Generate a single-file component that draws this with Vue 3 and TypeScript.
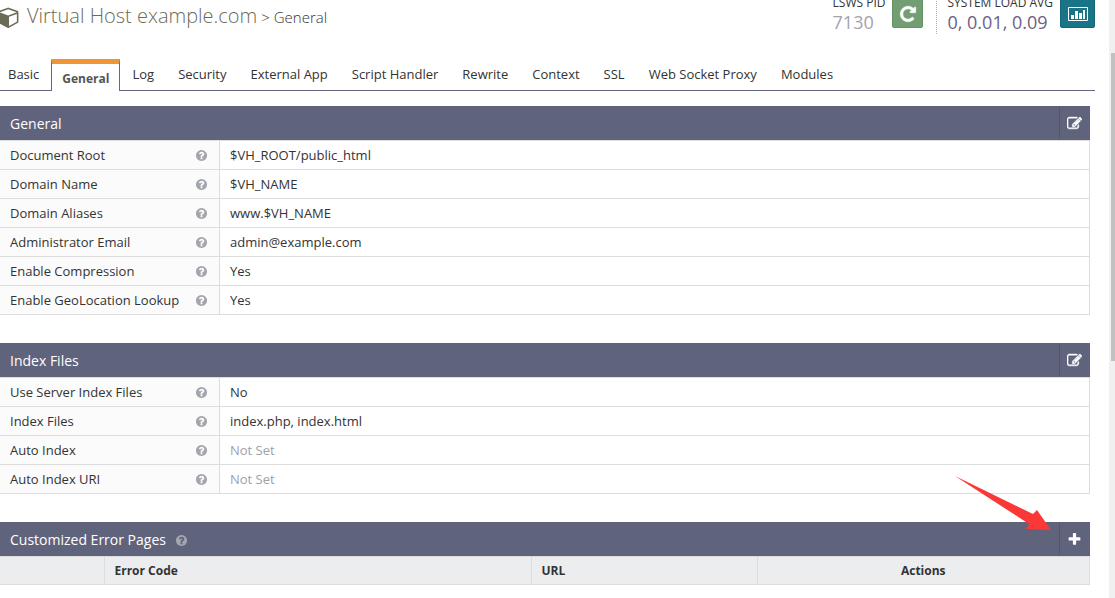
<script setup lang="ts">
import { ref } from 'vue'

interface Row {
  label: string
  value?: string
}
interface Section {
  title: string
  rows: Row[]
}

const tabs: string[] = [
  'Basic', 'General', 'Log', 'Security', 'External App', 'Script Handler',
  'Rewrite', 'Context', 'SSL', 'Web Socket Proxy', 'Modules',
]
const activeTab = ref('General')

const sections: Section[] = [
  {
    title: 'General',
    rows: [
      { label: 'Document Root', value: '$VH_ROOT/public_html' },
      { label: 'Domain Name', value: '$VH_NAME' },
      { label: 'Domain Aliases', value: 'www.$VH_NAME' },
      { label: 'Administrator Email', value: 'admin@example.com' },
      { label: 'Enable Compression', value: 'Yes' },
      { label: 'Enable GeoLocation Lookup', value: 'Yes' },
    ],
  },
  {
    title: 'Index Files',
    rows: [
      { label: 'Use Server Index Files', value: 'No' },
      { label: 'Index Files', value: 'index.php, index.html' },
      { label: 'Auto Index' },
      { label: 'Auto Index URI' },
    ],
  },
]

const helpPath =
  'M1024 1376v-192q0-14-9-23t-23-9h-192q-14 0-23 9t-9 23v192q0 14 9 23t23 9h192q14 0 23-9t9-23zm256-672q0-88-55.5-163t-138.5-116-170-41q-243 0-371 213-15 24 8 42l132 100q7 6 19 6 16 0 25-12 53-68 86-92 34-24 86-24 48 0 85.5 26t37.5 59q0 38-20 61t-68 45q-63 28-115.5 86.5t-52.5 125.5v36q0 14 9 23t23 9h192q14 0 23-9t9-23q0-19 21.5-49.5t54.5-49.5q32-18 49-28.5t46-35 44.5-48 28-60.5 12.5-81zm384 192q0 209-103 385.5t-279.5 279.5-385.5 103-385.5-103-279.5-279.5-103-385.5 103-385.5 279.5-279.5 385.5-103 385.5 103 279.5 279.5 103 385.5z'
const editPath =
  'M888 1184l116-116-152-152-116 116v56h96v96h56zm440-720q-16-16-33 1l-350 350q-17 17-1 33t33-1l350-350q17-17 1-33zm80 594v190q0 119-84.5 203.5t-203.5 84.5h-832q-119 0-203.5-84.5t-84.5-203.5v-832q0-119 84.5-203.5t203.5-84.5h832q63 0 117 25 15 7 18 23 3 17-9 29l-49 49q-14 14-32 8-23-6-45-6h-832q-66 0-113 47t-47 113v832q0 66 47 113t113 47h832q66 0 113-47t47-113v-126q0-13 9-22l64-64q15-15 35-7t20 29zm-96-738l288 288-672 672h-288v-288zm444 132l-92 92-288-288 92-92q28-28 68-28t68 28l152 152q28 28 28 68t-28 68z'
</script>

<template>
  <div class="screen">
    <main class="content">
      <header class="top">
        <h1 class="title">
          <svg class="cube" viewBox="0 0 1792 1792" aria-hidden="true">
            <path d="M896 1629l640-349v-636l-640 233v752zm-64-865l698-254-698-254-698 254zm832-252v768q0 35-18 65t-49 47l-704 384q-28 16-61 16t-61-16l-704-384q-31-17-49-47t-18-65v-768q0-40 23-73t61-47l704-256q22-8 44-8t44 8l704 256q38 14 61 47t23 73z" />
          </svg>
          <span class="name">Virtual Host example.com</span>
          <span class="crumb">&gt; General</span>
        </h1>
        <div class="stats">
          <div class="stat">
            <div class="figures">
              <span class="caption">LSWS PID</span>
              <span class="number pid">7130</span>
            </div>
            <button class="square restart" type="button" aria-label="Restart">
              <svg viewBox="0 0 1792 1792" width="18" height="18" aria-hidden="true">
                <path stroke="#fff" stroke-width="60" d="M1664 256v448q0 26-19 45t-45 19h-448q-42 0-59-40-17-39 14-69l138-138q-148-137-349-137-104 0-198.5 40.5t-163.5 109.5-109.5 163.5-40.5 198.5 40.5 198.5 109.5 163.5 163.5 109.5 198.5 40.5q119 0 225-52t179-147q7-10 23-12 15 0 25 9l137 138q9 8 9.5 20.5t-7.5 22.5q-109 132-264 204.5t-327 72.5q-156 0-298-61t-245-164-164-245-61-298 61-298 164-245 245-164 298-61q147 0 284.5 55.5t244.5 156.5l130-129q29-31 70-14 39 17 39 59z" />
              </svg>
            </button>
          </div>
          <div class="stat load">
            <div class="figures">
              <span class="caption">SYSTEM LOAD AVG</span>
              <span class="number">0, 0.01, 0.09</span>
            </div>
            <button class="square chart" type="button" aria-label="Load chart">
              <svg viewBox="0 0 20 14" width="20" height="14" aria-hidden="true">
                <path fill-rule="evenodd" d="M1 0H19Q20 0 20 1V13Q20 14 19 14H1Q0 14 0 13V1Q0 0 1 0ZM1 1V13H19V1ZM3 8H6V12H3ZM7 4H10V12H7ZM11 6H14V12H11ZM15 3H17V12H15Z" />
              </svg>
            </button>
          </div>
        </div>
      </header>

      <nav class="tabs">
        <a
          v-for="tab in tabs"
          :key="tab"
          href="#"
          class="tab"
          :class="{ active: tab === activeTab }"
          @click.prevent="activeTab = tab"
        >{{ tab }}</a>
      </nav>

      <section v-for="section in sections" :key="section.title" class="panel">
        <div class="bar">
          <h2>{{ section.title }}</h2>
          <button class="tool" type="button" :aria-label="'Edit ' + section.title">
            <svg viewBox="0 0 1792 1792" width="15" height="15" aria-hidden="true"><path stroke="#fff" stroke-width="60" :d="editPath" /></svg>
          </button>
        </div>
        <table class="props">
          <tbody>
            <tr v-for="row in section.rows" :key="row.label">
              <th scope="row">
                <div class="key">
                  <span>{{ row.label }}</span>
                  <svg class="help" viewBox="0 0 1792 1792" aria-hidden="true"><path :d="helpPath" /></svg>
                </div>
              </th>
              <td :class="{ unset: !row.value }">{{ row.value ?? 'Not Set' }}</td>
            </tr>
          </tbody>
        </table>
      </section>

      <section class="panel">
        <div class="bar">
          <h2>Customized Error Pages</h2>
          <svg class="help" viewBox="0 0 1792 1792" aria-hidden="true"><path :d="helpPath" /></svg>
          <button class="tool" type="button" aria-label="Add error page">
            <svg viewBox="0 0 1792 1792" width="15" height="15" aria-hidden="true">
              <path d="M1600 736v192q0 40-28 68t-68 28h-416v416q0 40-28 68t-68 28h-192q-40 0-68-28t-28-68v-416h-416q-40 0-68-28t-28-68v-192q0-40 28-68t68-28h416v-416q0-40 28-68t68-28h192q40 0 68 28t28 68v416h416q40 0 68 28t28 68z" />
            </svg>
          </button>
          <svg class="pointer" viewBox="0 0 97 55" width="97" height="55" aria-hidden="true">
            <path d="M0 0L78 38L82 34L96 54L71 53L74 48Z" />
          </svg>
        </div>
        <table class="errors">
          <colgroup>
            <col class="c-icon" /><col class="c-code" /><col class="c-url" /><col />
          </colgroup>
          <thead>
            <tr>
              <td></td>
              <th scope="col">Error Code</th>
              <th scope="col">URL</th>
              <th scope="col" class="actions">Actions</th>
            </tr>
          </thead>
        </table>
      </section>
    </main>
    <div class="rail"><div class="thumb"></div></div>
  </div>
</template>

<style>
body {
  margin: 0;
  background: #fff;
}
</style>

<style scoped>
.screen {
  display: flex;
  height: 100vh;
  overflow: hidden;
  font-family: "Open Sans", "Noto Sans", sans-serif;
  font-size: 13px;
  line-height: 18px;
  color: #333;
}
.content {
  flex: 1;
  min-width: 0;
  padding-right: 14px;
}
.rail {
  width: 4px;
  padding: 53px 0 0 2px;
  background: #f0f0f0;
}
.thumb {
  height: 308px;
  background: #c1c1c1;
}
.top {
  display: flex;
  justify-content: space-between;
  align-items: flex-start;
  height: 59px;
}
.title {
  display: flex;
  align-items: baseline;
  margin: 0;
  font-size: 20px;
  line-height: 32px;
  font-weight: 300;
  color: #6b6b56;
}
.cube {
  align-self: center;
  width: 22px;
  height: 22px;
  margin: 0 7px 0 -2px;
  fill: #6b6b56;
}
.crumb {
  margin-left: 4px;
  font-size: 15px;
  color: #333;
}
.stats {
  display: flex;
  margin-top: -5px;
}
.stat {
  display: flex;
  align-items: flex-start;
}
.load {
  margin-left: 13px;
  padding-left: 10px;
  border-left: 1px dotted #aaa;
}
.figures {
  display: flex;
  flex-direction: column;
  padding-bottom: 1px;
}
.caption {
  font-size: 12px;
  line-height: 16px;
}
.number {
  font-size: 18px;
  line-height: 22px;
  color: #6b5f84;
}
.pid {
  color: #a3a4b0;
}
.square {
  display: grid;
  place-items: center;
  height: 33px;
  margin-left: 7px;
  padding: 5px 0 0;
  border: 1px solid;
  border-radius: 2px;
  fill: #fff;
}
.restart {
  width: 31px;
  background: #739e73;
  border-color: #659265;
}
.chart {
  width: 35px;
  background: #1a7487;
  border-color: #156577;
}
.tabs {
  display: flex;
  height: 31px;
  border-bottom: 1px solid #666880;
}
.tab {
  padding: 6px 12px 0;
  color: #333;
  text-decoration: none;
}
.tab:first-child {
  padding-left: 8px;
}
.tab.active {
  height: 21px;
  padding: 6px 10px 0;
  border: 1px solid #666880;
  border-top: 5px solid #ed9537;
  border-bottom: 0;
  background: #fff;
  font-size: 12px;
  font-weight: 700;
  color: #555;
}
.panel {
  margin: 0 5px 28px 0;
}
.tabs + .panel {
  margin-top: 15px;
}
.bar {
  position: relative;
  display: flex;
  align-items: center;
  height: 34px;
  padding-left: 10px;
  background: #60637c;
  color: #fff;
}
.bar h2 {
  margin: 0;
  padding-top: 2px;
  font-size: 14px;
  font-weight: 400;
}
.help {
  width: 13px;
  height: 13px;
  fill: #a4a6ae;
}
.bar .help {
  margin: 2px 0 0 9px;
}
.tool {
  display: grid;
  place-items: center;
  width: 31px;
  height: 32px;
  margin-left: auto;
  padding: 0 2px 0 0;
  border: 0;
  border-left: 1px solid #52556b;
  background: none;
  fill: #fff;
}
.pointer {
  position: absolute;
  right: 38px;
  bottom: 25px;
  fill: #fb3838;
}
table {
  width: 100%;
  border-collapse: collapse;
  table-layout: fixed;
}
.props th,
.props td {
  height: 28px;
  padding: 0 10px;
  border: 1px solid #ddd;
  text-align: left;
  font-weight: 400;
}
.props th {
  width: 198px;
  padding-right: 11px;
  background: #fbfbfb;
}
th:first-child,
.errors td:first-child {
  border-left: 0;
}
.key {
  display: flex;
  align-items: center;
  justify-content: space-between;
}
.props td.unset {
  color: #a0a0a8;
}
.errors th,
.errors td {
  height: 27px;
  padding: 0 10px;
  border: 1px solid #ddd;
  background: #ebedef;
  text-align: left;
  font-size: 12px;
  font-weight: 700;
}
.errors .actions {
  text-align: center;
}
.c-icon {
  width: 104px;
}
.c-code {
  width: 427px;
}
.c-url {
  width: 226px;
}
</style>
